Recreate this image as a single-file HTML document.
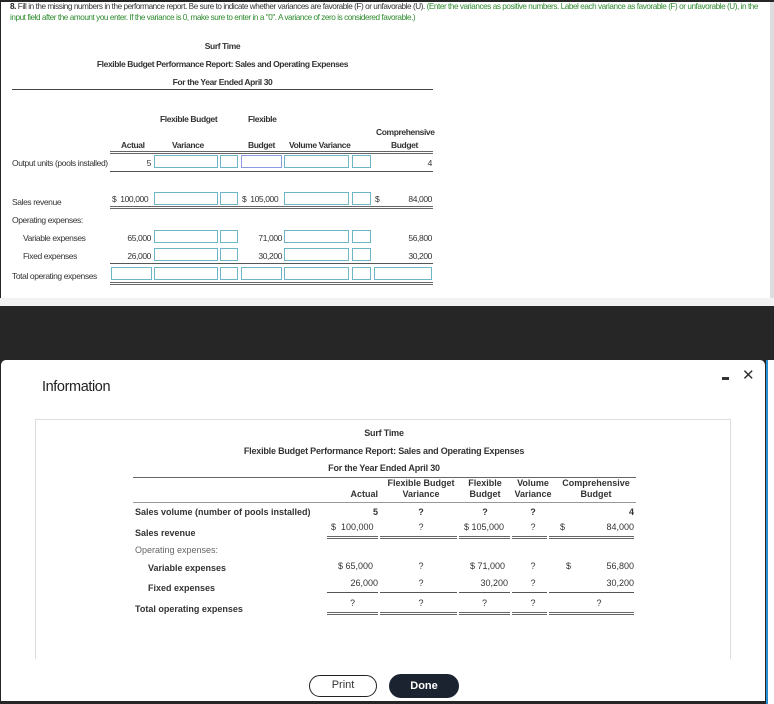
<!DOCTYPE html>
<html><head><meta charset="utf-8"><style>
*{margin:0;padding:0;box-sizing:border-box}
body{width:774px;height:704px;overflow:hidden;background:#262626;font-family:"Liberation Sans",Arial,sans-serif;position:relative}
.a{position:absolute;white-space:nowrap}
.t{font-size:8.5px;color:#333;letter-spacing:-0.4px;line-height:10px}
.b{font-weight:bold}
.g{color:#2e8b2e}
.box{position:absolute;height:13px;border:1px solid #6cb6c8;background:#fff}
.ln{position:absolute;height:1px;background:#555}
.dl{position:absolute;height:3px;border-top:1px solid #666;border-bottom:1px solid #666}
.m{font-size:9px;color:#333;line-height:11px}
.r{text-align:right}
.c{text-align:center}
</style></head><body>
<div class="a" style="left:1px;top:2px;width:769px;height:296px;background:#fff"></div>
<div class="a" style="left:770px;top:2px;width:4px;height:296px;background:#ddd"></div>
<div class="a" style="left:0;top:298px;width:774px;height:8px;background:#f2f2f2"></div>

<div class="a t" style="left:10px;top:2px;font-size:8.2px;letter-spacing:-0.45px;width:760px;overflow:hidden"><span class="b" style="color:#222">8.</span> Fill in the missing numbers in the performance report. Be sure to indicate whether variances are favorable (F) or unfavorable (U). <span class="g">(Enter the variances as positive numbers. Label each variance as favorable (F) or unfavorable (U), in the</span></div>
<div class="a t g" style="left:10px;top:13px;font-size:8.2px;letter-spacing:-0.45px">input field after the amount you enter. If the variance is 0, make sure to enter in a "0". A variance of zero is considered favorable.)</div>

<div class="a t b c" style="left:12px;width:421px;top:41px">Surf Time</div>
<div class="a t b c" style="left:12px;width:421px;top:59px">Flexible Budget Performance Report: Sales and Operating Expenses</div>
<div class="a t b c" style="left:12px;width:421px;top:77px">For the Year Ended April 30</div>
<div class="ln" style="left:12px;top:89px;width:421px;background:#444"></div>

<div class="a t b" style="left:160px;top:114px">Flexible Budget</div>
<div class="a t b" style="left:248px;top:114px">Flexible</div>
<div class="a t b" style="left:376px;top:127px">Comprehensive</div>
<div class="a t b" style="left:121px;top:140px">Actual</div>
<div class="a t b" style="left:172px;top:140px">Variance</div>
<div class="a t b" style="left:248px;top:140px">Budget</div>
<div class="a t b" style="left:289px;top:140px">Volume Variance</div>
<div class="a t b" style="left:391px;top:140px">Budget</div>
<div class="dl" style="left:110px;top:151px;width:323px"></div>

<div class="a t" style="left:12px;top:158px">Output units (pools installed)</div>
<div class="a t r" style="left:110px;width:41px;top:158px">5</div>
<div class="box" style="left:154px;top:155px;width:64px"></div>
<div class="box" style="left:220px;top:155px;width:18px"></div>
<div class="box" style="left:241px;top:155px;width:41px;border-color:#8a9be0"></div>
<div class="box" style="left:284px;top:155px;width:65px"></div>
<div class="box" style="left:352px;top:155px;width:19px"></div>
<div class="a t r" style="left:400px;width:32px;top:158px">4</div>
<div class="ln" style="left:110px;top:171px;width:323px"></div>

<div class="a t" style="left:12px;top:197px">Sales revenue</div>
<div class="a t" style="left:112px;top:194px">$&nbsp;&nbsp;100,000</div>
<div class="box" style="left:154px;top:192px;width:64px"></div>
<div class="box" style="left:220px;top:192px;width:18px"></div>
<div class="a t" style="left:242px;top:194px">$&nbsp;&nbsp;105,000</div>
<div class="box" style="left:284px;top:192px;width:65px"></div>
<div class="box" style="left:352px;top:192px;width:19px"></div>
<div class="a t" style="left:375px;top:194px">$</div>
<div class="a t r" style="left:390px;width:42px;top:194px">84,000</div>
<div class="dl" style="left:110px;top:206px;width:323px"></div>

<div class="a t" style="left:12px;top:215px">Operating expenses:</div>
<div class="a t" style="left:23px;top:233px">Variable expenses</div>
<div class="a t r" style="left:110px;width:41px;top:233px">65,000</div>
<div class="box" style="left:154px;top:230px;width:64px"></div>
<div class="box" style="left:220px;top:230px;width:18px"></div>
<div class="a t r" style="left:241px;width:41px;top:233px">71,000</div>
<div class="box" style="left:284px;top:230px;width:65px"></div>
<div class="box" style="left:352px;top:230px;width:19px"></div>
<div class="a t r" style="left:390px;width:42px;top:233px">56,800</div>

<div class="a t" style="left:23px;top:251px">Fixed expenses</div>
<div class="a t r" style="left:110px;width:41px;top:251px">26,000</div>
<div class="box" style="left:154px;top:248px;width:64px"></div>
<div class="box" style="left:220px;top:248px;width:18px"></div>
<div class="a t r" style="left:241px;width:41px;top:251px">30,200</div>
<div class="box" style="left:284px;top:248px;width:65px"></div>
<div class="box" style="left:352px;top:248px;width:19px"></div>
<div class="a t r" style="left:390px;width:42px;top:251px">30,200</div>
<div class="ln" style="left:110px;top:263px;width:323px"></div>

<div class="a t" style="left:12px;top:271px">Total operating expenses</div>
<div class="box" style="left:111px;top:267px;width:41px"></div>
<div class="box" style="left:154px;top:267px;width:64px"></div>
<div class="box" style="left:220px;top:267px;width:18px"></div>
<div class="box" style="left:241px;top:267px;width:41px"></div>
<div class="box" style="left:284px;top:267px;width:65px"></div>
<div class="box" style="left:352px;top:267px;width:19px"></div>
<div class="box" style="left:374px;top:267px;width:58px"></div>
<div class="dl" style="left:110px;top:282px;width:323px"></div>

<!-- modal -->
<div class="a" style="left:1px;top:360px;width:764px;height:341px;background:#fff;border-radius:5px 5px 0 0"></div>
<div class="a" style="left:766px;top:360px;width:8px;height:344px;background:#fff;border-left:2px solid #2a8fd0"></div>
<div class="a" style="left:42px;top:379px;font-size:14.5px;color:#222;letter-spacing:-0.4px">Information</div>
<div class="a" style="left:722px;top:377px;width:7px;height:3px;background:#333"></div>
<div class="a" style="left:742px;top:368px;font-size:15px;color:#333;line-height:15px">✕</div>
<div class="a" style="left:35px;top:419px;width:696px;height:240px;border:1px solid #ddd;border-bottom:none"></div>

<div class="a m b c" style="left:134px;width:500px;top:428px;letter-spacing:-0.2px">Surf Time</div>
<div class="a m b c" style="left:134px;width:500px;top:446px;letter-spacing:-0.2px">Flexible Budget Performance Report: Sales and Operating Expenses</div>
<div class="a m b c" style="left:134px;width:500px;top:463px;letter-spacing:-0.2px">For the Year Ended April 30</div>
<div class="ln" style="left:133px;top:477px;width:503px;background:#666"></div>
<div class="a m b c" style="left:385px;width:72px;top:478px">Flexible Budget<br>Variance</div>
<div class="a m b c" style="left:460px;width:50px;top:478px">Flexible<br>Budget</div>
<div class="a m b c" style="left:511px;width:44px;top:478px">Volume<br>Variance</div>
<div class="a m b c" style="left:557px;width:78px;top:478px">Comprehensive<br>Budget</div>
<div class="a m b r" style="left:320px;width:58px;top:489px">Actual</div>
<div class="ln" style="left:133px;top:502px;width:503px;background:#999"></div>

<div class="a m b" style="left:135px;top:507px">Sales volume (number of pools installed)</div>
<div class="a m b r" style="left:320px;width:58px;top:507px">5</div>
<div class="a m b c" style="left:385px;width:72px;top:507px">?</div>
<div class="a m b c" style="left:460px;width:50px;top:507px">?</div>
<div class="a m b c" style="left:511px;width:44px;top:507px">?</div>
<div class="a m b r" style="left:580px;width:54px;top:507px">4</div>

<div class="a m b" style="left:135px;top:528px">Sales revenue</div>
<div class="a m" style="left:331px;top:522px">$&nbsp;&nbsp;100,000</div>
<div class="a m c" style="left:385px;width:72px;top:522px">?</div>
<div class="a m" style="left:464px;top:522px">$ 105,000</div>
<div class="a m c" style="left:511px;width:44px;top:522px">?</div>
<div class="a m" style="left:560px;top:522px">$</div>
<div class="a m r" style="left:580px;width:54px;top:522px">84,000</div>
<div class="dl" style="left:327px;top:536px;width:51px"></div>
<div class="dl" style="left:380px;top:536px;width:77px"></div>
<div class="dl" style="left:459px;top:536px;width:51px"></div>
<div class="dl" style="left:512px;top:536px;width:35px"></div>
<div class="dl" style="left:549px;top:536px;width:85px"></div>

<div class="a m" style="left:135px;top:545px;color:#666">Operating expenses:</div>
<div class="a m b" style="left:148px;top:563px">Variable expenses</div>
<div class="a m" style="left:338px;top:561px">$ 65,000</div>
<div class="a m c" style="left:385px;width:72px;top:561px">?</div>
<div class="a m" style="left:470px;top:561px">$ 71,000</div>
<div class="a m c" style="left:511px;width:44px;top:561px">?</div>
<div class="a m" style="left:566px;top:561px">$</div>
<div class="a m r" style="left:580px;width:54px;top:561px">56,800</div>

<div class="a m b" style="left:148px;top:583px">Fixed expenses</div>
<div class="a m r" style="left:320px;width:58px;top:578px">26,000</div>
<div class="a m c" style="left:385px;width:72px;top:578px">?</div>
<div class="a m r" style="left:450px;width:58px;top:578px">30,200</div>
<div class="a m c" style="left:511px;width:44px;top:578px">?</div>
<div class="a m r" style="left:580px;width:54px;top:578px">30,200</div>
<div class="ln" style="left:327px;top:592px;width:51px"></div>
<div class="ln" style="left:380px;top:592px;width:77px"></div>
<div class="ln" style="left:459px;top:592px;width:51px"></div>
<div class="ln" style="left:512px;top:592px;width:35px"></div>
<div class="ln" style="left:549px;top:592px;width:85px"></div>

<div class="a m b" style="left:135px;top:604px">Total operating expenses</div>
<div class="a m c" style="left:327px;width:51px;top:598px">?</div>
<div class="a m c" style="left:385px;width:72px;top:598px">?</div>
<div class="a m c" style="left:459px;width:51px;top:598px">?</div>
<div class="a m c" style="left:511px;width:44px;top:598px">?</div>
<div class="a m c" style="left:560px;width:78px;top:598px">?</div>
<div class="dl" style="left:327px;top:612px;width:51px"></div>
<div class="dl" style="left:380px;top:612px;width:77px"></div>
<div class="dl" style="left:459px;top:612px;width:51px"></div>
<div class="dl" style="left:512px;top:612px;width:35px"></div>
<div class="dl" style="left:549px;top:612px;width:85px"></div>

<div class="a" style="left:309px;top:675px;width:68px;height:22px;border:1.5px solid #222;border-radius:11px;font-size:11px;color:#333;text-align:center;line-height:19px">Print</div>
<div class="a" style="left:389px;top:674px;width:70px;height:24px;background:#1b2330;border-radius:12px;font-size:11px;color:#fff;font-weight:bold;text-align:center;line-height:24px">Done</div>
</body></html>
